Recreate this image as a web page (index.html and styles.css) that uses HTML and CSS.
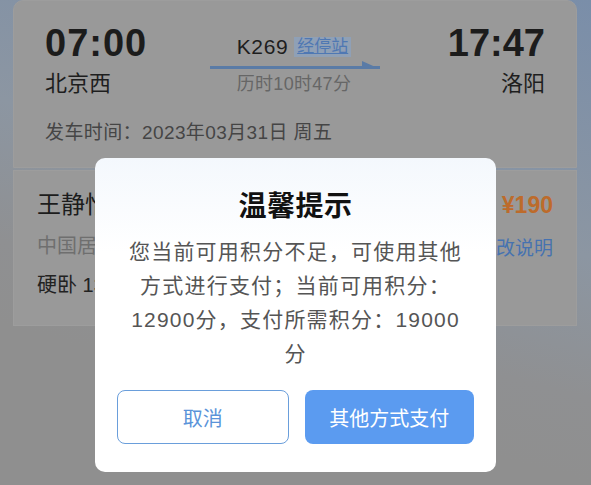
FILE: index.html
```html
<!DOCTYPE html>
<html lang="zh">
<head>
<meta charset="utf-8">
<title>订单确认</title>
<link rel="stylesheet" href="styles.css">
</head>
<body>
<div class="page">
  <section class="card trip">
    <div class="trip-main">
      <div class="station left">
        <div class="time">07:00</div>
        <div class="name">北京西</div>
      </div>
      <div class="middle">
        <div class="train"><span class="no">K269</span><span class="stops">经停站</span></div>
        <svg class="arrow" width="170" height="10" viewBox="0 0 170 10">
          <path d="M0 7.5 H170" fill="none" stroke="#5a7ba6" stroke-width="3"/>
          <path d="M152 1 L170 9 L152 9 Z" fill="#5a7ba6"/>
        </svg>
        <div class="duration">历时10时47分</div>
      </div>
      <div class="station right">
        <div class="time">17:47</div>
        <div class="name">洛阳</div>
      </div>
    </div>
    <div class="date">发车时间：2023年03月31日 周五</div>
  </section>
  <section class="card passenger">
    <div class="row">
      <span class="pname">王静怡</span>
      <span class="price">¥190</span>
    </div>
    <div class="row">
      <span class="idtype">中国居民</span>
      <span class="rule">退改说明</span>
    </div>
    <div class="row">
      <span class="seat">硬卧 13车</span>
    </div>
  </section>
</div>
<div class="mask">
  <div class="dialog">
    <h2 class="title">温馨提示</h2>
    <p class="msg">您当前可用积分不足，可使用其他<br>方式进行支付；当前可用积分：<br>12900分，支付所需积分：19000<br>分</p>
    <div class="actions">
      <button class="btn cancel">取消</button>
      <button class="btn ok">其他方式支付</button>
    </div>
  </div>
</div>
</body>
</html>
```
FILE: styles.css
```css
* { box-sizing: border-box; }
html, body { margin: 0; padding: 0; }
body {
  width: 591px;
  height: 485px;
  overflow: hidden;
  font-family: "Liberation Sans", "Noto Sans CJK SC", sans-serif;
  background: linear-gradient(195deg, #7a8ea9 0%, #8c96a2 40%, #8f9092 62%, #8f8f8f 75%);
  background-color: #8f8f8f;
}
.page {
  padding: 0 14px 0 13px;
  display: flex;
  flex-direction: column;
  gap: 2px;
}
.card {
  background: #999999;
  border: 1px solid #9d9d9d;
}
.trip {
  border-radius: 10px 10px 0 0;
  padding: 20px 31px 21px 31px;
}
.trip-main {
  display: grid;
  grid-template-columns: 1fr 170px 1fr;
  align-items: start;
}
.time {
  font-size: 38px;
  font-weight: 700;
  line-height: 44px;
  letter-spacing: 1px;
  color: #1c1c1c;
}
.right .time { letter-spacing: 0; }
.name {
  font-size: 22px;
  line-height: 30px;
  margin-top: 4px;
  color: #1e1e1e;
}
.right { text-align: right; }
.middle {
  padding-top: 13px;
  display: flex;
  flex-direction: column;
  align-items: center;
}
.train {
  display: flex;
  align-items: center;
  gap: 6px;
  height: 26px;
  margin-left: -2px;
}
.no {
  font-size: 21px;
  color: #1e1e1e;
  letter-spacing: 0.6px;
}
.stops {
  font-size: 17px;
  color: #4f78b3;
  text-decoration: underline;
  background: #8fa0b6;
  padding: 0 3px;
  line-height: 20px;
}
.arrow { display: block; }
.duration {
  font-size: 18px;
  line-height: 24px;
  letter-spacing: 0.3px;
  color: #666666;
  margin-top: 2px;
  margin-left: -2px;
}
.date {
  margin-top: 21px;
  font-size: 19px;
  line-height: 26px;
  letter-spacing: 0.4px;
  color: #454545;
}
.passenger {
  padding: 18px 23px 26px 23px;
  display: flex;
  flex-direction: column;
  gap: 11px;
}
.row {
  display: flex;
  justify-content: space-between;
  align-items: center;
}
.pname { font-size: 24px; line-height: 32px; color: #1c1c1c; }
.price { font-size: 23px; font-weight: 700; color: #bd6b2b; }
.idtype { font-size: 20px; line-height: 28px; color: #6f6f6f; }
.rule { font-size: 19px; color: #4672b0; }
.seat { font-size: 20px; line-height: 28px; color: #222; }

.mask {
  position: fixed;
  inset: 0;
}
.dialog {
  position: absolute;
  left: 95px;
  top: 158px;
  width: 401px;
  height: 314px;
  border-radius: 10px;
  background: linear-gradient(180deg, #f4f8fd 0%, #ffffff 30%);
  padding: 29px 22px 28px 22px;
  display: flex;
  flex-direction: column;
  align-items: center;
}
.title {
  margin: 0;
  font-size: 28px;
  line-height: 40px;
  font-weight: 700;
  color: #111;
  letter-spacing: 0.5px;
}
.msg {
  margin: 8px 0 0 0;
  font-size: 21px;
  line-height: 34px;
  letter-spacing: 1.2px;
  color: #555;
  text-align: center;
}
.actions {
  margin-top: auto;
  display: flex;
  gap: 16px;
  width: 100%;
}
.btn {
  flex: 1;
  height: 54px;
  border-radius: 8px;
  font-family: "Liberation Sans", "Noto Sans CJK SC", sans-serif;
  font-size: 20px;
  cursor: pointer;
}
.cancel {
  background: #fff;
  border: 1.5px solid #6a9edb;
  color: #5a93d9;
}
.ok {
  background: #5b9bf0;
  border: none;
  color: #fff;
}
```
